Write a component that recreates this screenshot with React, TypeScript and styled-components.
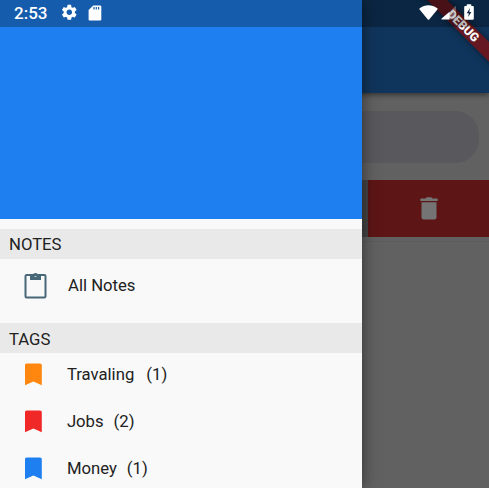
import React from "react";
import styled, { createGlobalStyle } from "styled-components";

const GlobalStyle = createGlobalStyle`
  *, *::before, *::after { box-sizing: border-box; }
  body { margin: 0; overflow: hidden; font-family: Roboto, sans-serif; }
  svg { display: block; flex: none; }
`;

const Screen = styled.div`
  position: relative;
  width: 489px;
  height: 488px;
  overflow: hidden;
  background: #616161;
`;

const Page = styled.main`
  display: flex;
  flex-direction: column;
  height: 100%;
`;

const AppBar = styled.header`
  height: 93px;
  flex: none;
  background: #10355c;
  box-shadow: 0 2px 5px rgba(0, 0, 0, 0.45);
`;

const SearchField = styled.div`
  height: 52px;
  flex: none;
  margin: 18px 10px 0;
  border-radius: 24px;
  background: #59585d;
`;

const NoteCard = styled.div`
  height: 62px;
  flex: none;
  margin-top: 17px;
  border-bottom: 1px solid #5c5c5c;
`;

const SwipeRow = styled.div`
  display: flex;
  height: 57px;
  background: #454545;
`;

const DeleteAction = styled.div`
  display: flex;
  align-items: center;
  justify-content: center;
  width: 121px;
  margin-left: auto;
  background: #5d1515;
`;

const Drawer = styled.aside`
  position: absolute;
  inset: 0 auto 0 0;
  display: flex;
  flex-direction: column;
  width: 362px;
  background: #f9f9f9;
  box-shadow: 0 0 15px rgba(0, 0, 0, 0.5);
`;

const DrawerHeader = styled.div`
  height: 219px;
  flex: none;
  background: #1e80f0;
`;

const SectionTitle = styled.h2<{ $gap: number; $line: number }>`
  height: 30px;
  flex: none;
  margin: ${(p) => p.$gap}px 0 0;
  padding-left: 9px;
  background: #e9e9e9;
  color: #212121;
  font-size: 16.7px;
  font-weight: 400;
  line-height: ${(p) => p.$line}px;
`;

const Item = styled.div<{ $height: number; $inset: number; $gap: number }>`
  display: flex;
  align-items: center;
  height: ${(p) => p.$height}px;
  flex: none;
  padding-left: ${(p) => p.$inset}px;
  gap: ${(p) => p.$gap}px;
  color: #212121;
  font-size: 16.7px;
`;

const TagList = styled.div`
  margin-top: -2.6px;
`;

const TagLabel = styled.span`
  padding-top: 1px;
`;

const Count = styled.span<{ $space: number }>`
  margin-left: ${(p) => p.$space}px;
`;

const StatusBar = styled.div`
  position: absolute;
  inset: 0 0 auto 0;
  display: flex;
  align-items: center;
  height: 27px;
  padding: 0 15px 0 14px;
  background: rgba(0, 0, 0, 0.28);
  color: #fff;
`;

const Clock = styled.span`
  width: 45.5px;
  font-size: 17px;
  font-weight: 500;
  line-height: 27px;
`;

const SystemIcons = styled.div`
  display: flex;
  align-items: center;
  gap: 7.7px;
  margin-top: -1.5px;
`;

const SignalIcons = styled.div`
  display: flex;
  align-items: flex-end;
  gap: 3px;
  height: 16px;
  margin: -3px 0 0 auto;
`;

const BatterySlot = styled.span`
  margin-left: 5.5px;
`;

const RibbonCorner = styled.div`
  position: absolute;
  top: 0;
  right: 0;
  width: 90px;
  height: 90px;
  overflow: hidden;
`;

const Ribbon = styled.div`
  position: absolute;
  top: 19px;
  right: -44px;
  width: 140px;
  height: 14.4px;
  transform: rotate(45deg);
  background: #651822;
  box-shadow: 0 0 7px rgba(0, 0, 0, 0.5);
  color: #fff;
  font-size: 12.2px;
  font-weight: 900;
  line-height: 14.8px;
  text-align: center;
`;

function Glyph({ d, size, color = "#fff" }: { d: string; size: number; color?: string }) {
  return (
    <svg width={size} height={size} viewBox="0 0 24 24" fill={color}>
      <path d={d} />
    </svg>
  );
}

const icons = {
  gear: "M19.14 12.94c.04-.3.06-.61.06-.94 0-.32-.02-.64-.07-.94l2.03-1.58c.18-.14.23-.41.12-.61l-1.92-3.32c-.12-.22-.37-.29-.59-.22l-2.39.96c-.5-.38-1.03-.7-1.62-.94l-.36-2.54c-.04-.24-.24-.41-.48-.41h-3.84c-.24 0-.43.17-.47.41l-.36 2.54c-.59.24-1.13.57-1.62.94l-2.39-.96c-.22-.08-.47 0-.59.22L2.74 8.87c-.12.21-.08.47.12.61l2.03 1.58c-.05.3-.09.63-.09.94s.02.64.07.94l-2.03 1.58c-.18.14-.23.41-.12.61l1.92 3.32c.12.22.37.29.59.22l2.39-.96c.5.38 1.03.7 1.62.94l.36 2.54c.05.24.24.41.48.41h3.84c.24 0 .44-.17.47-.41l.36-2.54c.59-.24 1.13-.56 1.62-.94l2.39.96c.22.08.47 0 .59-.22l1.92-3.32c.12-.22.07-.47-.12-.61l-2.01-1.58zM12 15.6c-1.98 0-3.6-1.62-3.6-3.6s1.62-3.6 3.6-3.6 3.6 1.62 3.6 3.6-1.62 3.6-3.6 3.6z",
  bookmark: "M17.5 3H6.5C5.6 3 5 3.6 5 4.5V21l7-3 7 3V4.5c0-.9-.6-1.5-1.5-1.5z",
};

function CardIcon() {
  return (
    <svg width="18" height="18" viewBox="0 0 18 18">
      <path d="M7.3 1.5h6.7q1.3 0 1.3 1.3v12.4q0 1.3-1.3 1.3H3.9q-1.3 0-1.3-1.3V6z" fill="#fff" />
      <path d="M8 2.9v2.6M10.3 2.9v2.6M12.6 2.9v2.6" stroke="#1759a8" strokeWidth="1.2" />
    </svg>
  );
}

function WifiIcon() {
  return (
    <svg width="19" height="15" viewBox="0 0 19 15">
      <path d="M.7 3.3C5.8-.8 13.2-.8 18.3 3.3q.6.5.1 1.1l-8 9.8q-.9 1-1.8 0l-8-9.8q-.5-.6.1-1.1z" fill="#fff" />
    </svg>
  );
}

function SignalIcon() {
  return (
    <svg width="15" height="15" viewBox="0 0 15 15" fill="#fff">
      <path d="M8.5 7 14.2 1.2q.8-.6.8.4V13.8q0 .7-.8.7H8.5z" fillOpacity=".28" />
      <path d="M8.5 6.7v7.8H1q-1.2-.2-.4-1.1z" />
    </svg>
  );
}

function BatteryIcon() {
  return (
    <svg width="10" height="16" viewBox="0 0 10 16">
      <path d="M2.7 2V.8q0-.6.6-.6h3.4q.6 0 .6.6V2h1.5q1 0 1 1v11.8q0 1-1 1H1.2q-1 0-1-1V3q0-1 1-1z" fill="#fff" />
      <path d="M6 4 2.7 9.3h2.1L4.1 13 7.4 7.9H5.3z" fill="#0b2540" />
    </svg>
  );
}

function ClipboardIcon() {
  return (
    <svg width="23" height="27" viewBox="0 0 23 27">
      <rect x="1.5" y="2.9" width="20" height="22.6" rx="1.2" fill="none" stroke="#486879" strokeWidth="2" />
      <path
        d="M6 3.2h2.7a2.9 2.9 0 0 1 5.6 0H17v4.7H6zM11.5 2.2a1.3 1.3 0 1 0 0 2.6 1.3 1.3 0 0 0 0-2.6z"
        fill="#486879"
        fillRule="evenodd"
      />
    </svg>
  );
}

function TrashIcon() {
  return (
    <svg width="18" height="23" viewBox="0 0 18 23" fill="#747474">
      <path d="M.8 1.5h4.7L6.7.3h4.6l1.2 1.2h4.7q.5 0 .5.5v1.5q0 .5-.5.5H.8q-.5 0-.5-.5V2q0-.5.5-.5z" />
      <path d="M1.5 5.3h15v15q0 2.3-2.3 2.3H3.8q-2.3 0-2.3-2.3z" />
    </svg>
  );
}

const tags = [
  { name: "Travaling", count: 1, color: "#ff870f", space: 12 },
  { name: "Jobs", count: 2, color: "#f02828", space: 10 },
  { name: "Money", count: 1, color: "#1e80f0", space: 10 },
];

export default function App() {
  return (
    <Screen>
      <GlobalStyle />
      <Page>
        <AppBar />
        <SearchField />
        <NoteCard>
          <SwipeRow>
            <DeleteAction>
              <TrashIcon />
            </DeleteAction>
          </SwipeRow>
        </NoteCard>
      </Page>
      <Drawer>
        <DrawerHeader />
        <SectionTitle $gap={10} $line={31}>
          NOTES
        </SectionTitle>
        <Item $height={53} $inset={24} $gap={21}>
          <ClipboardIcon />
          All Notes
        </Item>
        <SectionTitle $gap={11} $line={33}>
          TAGS
        </SectionTitle>
        <TagList>
          {tags.map((tag) => (
            <Item key={tag.name} $height={47} $inset={18.6} $gap={19.5}>
              <Glyph d={icons.bookmark} size={28.8} color={tag.color} />
              <TagLabel>
                {tag.name}
                <Count $space={tag.space}>({tag.count})</Count>
              </TagLabel>
            </Item>
          ))}
        </TagList>
      </Drawer>
      <RibbonCorner>
        <Ribbon>DEBUG</Ribbon>
      </RibbonCorner>
      <StatusBar>
        <Clock>2:53</Clock>
        <SystemIcons>
          <Glyph d={icons.gear} size={18.6} />
          <CardIcon />
        </SystemIcons>
        <SignalIcons>
          <WifiIcon />
          <SignalIcon />
          <BatterySlot>
            <BatteryIcon />
          </BatterySlot>
        </SignalIcons>
      </StatusBar>
    </Screen>
  );
}
